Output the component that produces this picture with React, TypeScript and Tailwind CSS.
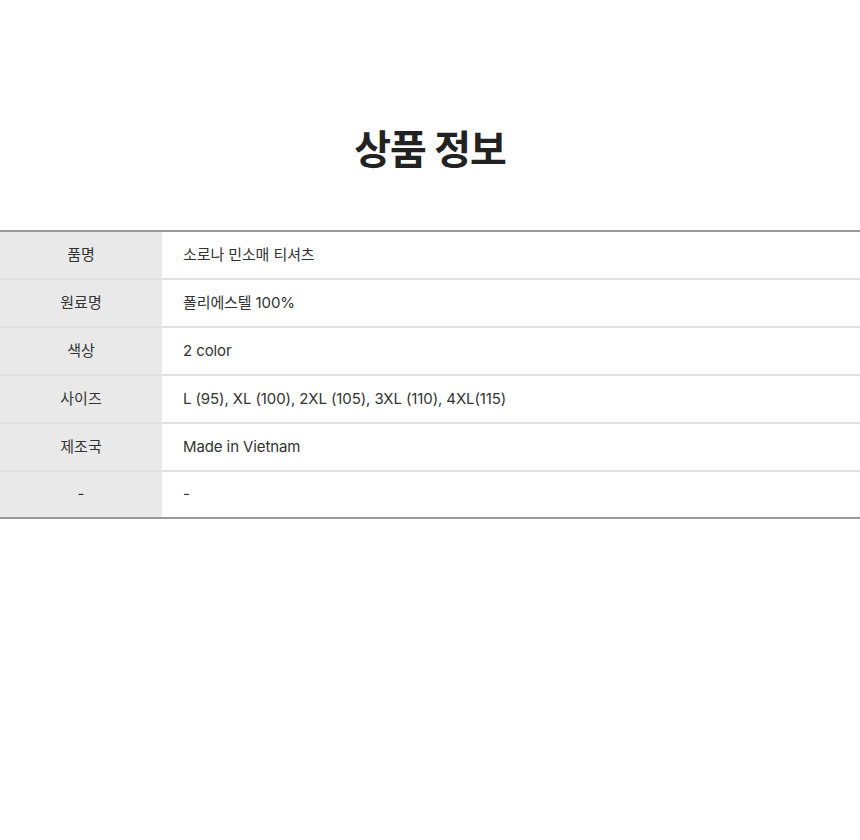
const rows: [string, string][] = [
  ["품명", "소로나 민소매 티셔츠"],
  ["원료명", "폴리에스텔 100%"],
  ["색상", "2 color"],
  ["사이즈", "L (95), XL (100), 2XL (105), 3XL (110), 4XL(115)"],
  ["제조국", "Made in Vietnam"],
  ["-", "-"],
];

export default function App() {
  return (
    <div
      className="w-[860px] h-[840px] bg-white text-[#333]"
      style={{ fontFamily: 'Inter, "Noto Sans CJK KR", sans-serif' }}
    >
      <h1 className="pt-[124px] pb-[55px] text-center text-[40px] leading-[51px] font-bold text-[#222] tracking-[-1px]">
        상품 정보
      </h1>
      <div className="border-t-2 border-b-2 border-[#999]">
        {rows.map(([label, value], i) => (
          <div
            key={i}
            className={`flex ${i < rows.length - 1 ? "border-b-2 border-[#e0e0e0] h-[48px]" : "h-[45px]"}`}
          >
            <div className="w-[162px] shrink-0 bg-[#e9e9e9] flex items-center justify-center text-[15px]">
              {label}
            </div>
            <div className="flex-1 flex items-center pl-[21px] text-[15px] tracking-[-0.1px]">
              {value}
            </div>
          </div>
        ))}
      </div>
    </div>
  );
}
